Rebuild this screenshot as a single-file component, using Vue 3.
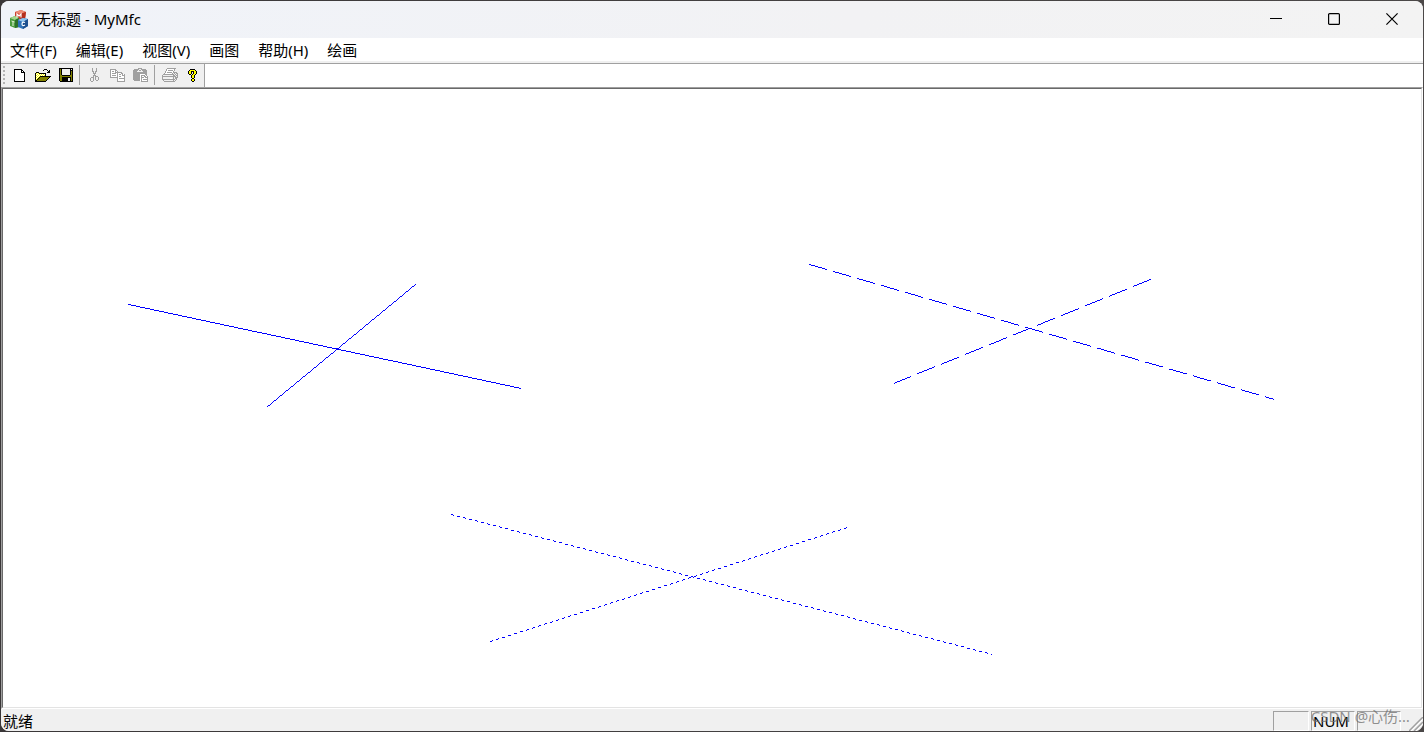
<script setup>
const BLACK = '#000000'
const OLIVE = '#808000'
const YELLOW = '#ffff00'
const GREY = '#a0a0a0'

const palette = { '#': BLACK, o: OLIVE, y: YELLOW, w: '#ffffff', s: '#f0f0f0', g: GREY }

const glyphs = {
  new: [
    '########...',
    '#wwwwww##..',
    '#wwwwww#w#.',
    '#wwwwww####',
    '#wwwwwwwww#',
    '#wwwwwwwww#',
    '#wwwwwwwww#',
    '#wwwwwwwww#',
    '#wwwwwwwww#',
    '#wwwwwwwww#',
    '#wwwwwwwww#',
    '#wwwwwwwww#',
    '###########',
  ],
  open: [
    '.........###....',
    '........#...#.#.',
    '.............##.',
    '.###........###.',
    '#ywy#######.....',
    '#wywywywyw#.....',
    '#ywywywywy#.....',
    '#wywy###########',
    '#ywy#ooooooooo#.',
    '#wy#ooooooooo#..',
    '#y#ooooooooo#...',
    '##ooooooooo#....',
    '###########.....',
  ],
  save: [
    '##############',
    '#o#ssssssss#s#',
    '#o#ssssssss###',
    '#o#ssssssss#o#',
    '#o#ssssssss#o#',
    '#o#ssssssss#o#',
    '#o#ssssssss#o#',
    '#oo########oo#',
    '#oooooooooooo#',
    '#oo#########o#',
    '#oo######ss#o#',
    '#oo######ss#o#',
    '#oo######ss#o#',
    '.#############',
  ],
  cut: [
    '..g...g..',
    '..g...g..',
    '..g...g..',
    '..gg.gg..',
    '...g.g...',
    '...ggg...',
    '....g....',
    '...ggg...',
    '...g.ggg.',
    '.ggg.g..g',
    'g..g.g..g',
    'g..g.g..g',
    'g..g..gg.',
    '.gg......',
  ],
  copy: [
    'gggggg.........',
    'gwwwwgg........',
    'gwggwgwg.......',
    'gwwwwggggggg...',
    'gwggggwgwwwgg..',
    'gwwwwwwgwggwgwg',
    'gwggggwgwwwwggg',
    'gwwwwwwgwggwwwg',
    'ggggggggwwwwwwg',
    '.......gwgggggg',
    '.......gwwwwwwg',
    '.......gwwwwwwg',
    '.......gggggggg',
  ],
  paste: [
    '.....gggg......',
    '.ggggg..ggggg..',
    'ggggg.gg.ggggg.',
    'gggg......gggg.',
    'gggggggggggggg.',
    'gggggggggggggg.',
    'gggggggwwwwwgg.',
    'gggggggwggggwg.',
    'gggggggwgwwggwg',
    'gggggggwgggwggg',
    'gggggggwgwwwwwg',
    'gggggggwgwggggg',
    '.ggggggwgwwwwwg',
    '........ggggggg',
  ],
  print: [
    '.....ggggggggg..',
    '....gwwwwwwwg...',
    '....gwgggggwg...',
    '...gwwwwwwwg....',
    '...gwgggggwgggg.',
    '..gwwwwwwwg.g.gg',
    '.ggggggggggg.g.g',
    'g..........gg.gg',
    'gggggggggggggg.g',
    'g..........g.ggg',
    'g.......ww.g.gg.',
    'ggggggggggggg.g.',
    '.g.........g.g..',
    '..ggggggggggg...',
  ],
  help: [
    '..#####..',
    '.#yyyyy#.',
    '#yy###yy#',
    '#yy#.#yy#',
    '#yy#.#yy#',
    '.##.#yy#.',
    '...#yy#..',
    '...#yy#..',
    '...#yy#..',
    '....##...',
    '...#yy#..',
    '...#yy#..',
    '....##...',
  ],
}

function layers(rows) {
  const out = {}
  rows.forEach((row, y) => {
    ;[...row].forEach((c, x) => {
      if (c !== '.') out[c] = (out[c] || '') + `M${x} ${y}h1v1h-1z`
    })
  })
  return Object.entries(out).map(([c, d]) => ({ fill: palette[c], d }))
}

const groups = [
  [
    { id: 'new', label: '新建' },
    { id: 'open', label: '打开' },
    { id: 'save', label: '保存' },
  ],
  [
    { id: 'cut', label: '剪切', disabled: true },
    { id: 'copy', label: '复制', disabled: true },
    { id: 'paste', label: '粘贴', disabled: true },
  ],
  [
    { id: 'print', label: '打印', disabled: true },
    { id: 'help', label: '关于' },
  ],
].map((g) =>
  g.map((b) => ({
    ...b,
    w: glyphs[b.id][0].length,
    h: glyphs[b.id].length,
    layers: layers(glyphs[b.id]),
  })),
)

const menus = ['文件(F)', '编辑(E)', '视图(V)', '画图', '帮助(H)', '绘画']

// Pen strokes in client coordinates: start, end, pixels on, pixels off.
const strokes = [
  { from: [125, 215], to: [518, 299], on: 1, off: 0 },
  { from: [412, 195], to: [263, 318], on: 1, off: 0 },
  { from: [806, 175], to: [1271, 310], on: 18, off: 6 },
  { from: [1147, 190], to: [890, 294], on: 18, off: 6 },
  { from: [448, 425], to: [989, 565], on: 3, off: 3 },
  { from: [487, 552], to: [844, 438], on: 3, off: 3 },
]

// One-pixel-wide line without smoothing, as a device pen draws it.
function trace({ from, to, on, off }) {
  const dx = to[0] - from[0]
  const dy = to[1] - from[1]
  const n = Math.abs(dx)
  let d = ''
  for (let i = 0; i < n; i++) {
    if (i % (on + off) >= on) continue
    const x = from[0] + Math.sign(dx) * i
    const y = Math.round(from[1] + (dy * i) / n)
    d += `M${x} ${y}h1v1h-1z`
  }
  return d
}
const drawing = strokes.map(trace).join('')
</script>

<template>
  <div class="desktop">
    <div class="window">
      <header class="titlebar">
        <svg class="logo" width="20" height="20" viewBox="0 0 20 20" aria-hidden="true">
          <path d="M6 3l6-2 5 2-1 7-5 2-5-2z" fill="#c9402c" />
          <path d="M6 3l6-2 5 2-6 2z" fill="#ee8c76" />
          <path d="M11 5l6-2-1 7-5 2z" fill="#b5301f" />
          <path d="M1 9l5-2 4 2v9l-4 1-5-2z" fill="#4a9b3c" />
          <path d="M1 9l5-2 4 2-4 2z" fill="#a5d48b" />
          <path d="M6 11l4-2v9l-4 1z" fill="#2c7029" />
          <path d="M9 11l5-2 5 1v7l-5 3-5-2z" fill="#2f72b8" />
          <path d="M9 11l5-2 5 1-5 3z" fill="#8fc4ee" />
          <path d="M14 13l5-3v7l-5 3z" fill="#1e508f" />
          <path d="M8 8.500V5l2 2 2-2v3.500" fill="none" stroke="#fff" stroke-width="1.200" />
          <path d="M2.500 12l3 1M4 13v4" fill="none" stroke="#e8f6dd" stroke-width="1" />
          <path d="M16 13.500q-3-1-3 1.500t3 1" fill="none" stroke="#fff" stroke-width="1.200" />
        </svg>
        <h1 class="title">无标题 - MyMfc</h1>
        <div class="captions">
          <button type="button" aria-label="最小化">
            <svg width="12" height="12" viewBox="0 0 12 12"><path d="M0 5.500h12" stroke="#000" /></svg>
          </button>
          <button type="button" aria-label="最大化">
            <svg width="12" height="12" viewBox="0 0 12 12">
              <rect x=".6" y=".6" width="10.800" height="10.800" rx="1" fill="none" stroke="#000" stroke-width="1.200" />
            </svg>
          </button>
          <button type="button" aria-label="关闭">
            <svg width="12" height="12" viewBox="0 0 12 12">
              <path d="M.4.4l11.200 11.200M11.600.4L.4 11.600" stroke="#000" stroke-width="1.200" />
            </svg>
          </button>
        </div>
      </header>

      <nav class="menubar">
        <button v-for="m in menus" :key="m" type="button">{{ m }}</button>
      </nav>

      <div class="toolrow">
        <div class="toolbar" role="toolbar" aria-label="工具栏">
          <span class="grip"></span>
          <div v-for="(g, i) in groups" :key="i" class="group">
            <button v-for="b in g" :key="b.id" type="button" :disabled="b.disabled" :aria-label="b.label">
              <svg :width="b.w" :height="b.h" :viewBox="`0 0 ${b.w} ${b.h}`" shape-rendering="crispEdges">
                <path v-for="l in b.layers" :key="l.fill" :fill="l.fill" :d="l.d" />
              </svg>
            </button>
          </div>
        </div>
      </div>

      <main class="client">
        <svg class="drawing" shape-rendering="crispEdges" role="img" aria-label="绘画">
          <path :d="drawing" fill="#0000ff" />
        </svg>
      </main>

      <footer class="statusbar">
        <span class="message">就绪</span>
        <span class="pane caps"></span>
        <span class="pane num">NUM</span>
        <span class="pane scroll"></span>
        <svg class="resize" width="14" height="14" viewBox="0 0 14 14" aria-hidden="true">
          <path d="M0 14L14 0M5 14l9-9M10 14l4-4" stroke="#a0a0a0" stroke-width="1.500" />
          <path d="M2 14L14 2M7 14l7-7" stroke="#fff" />
        </svg>
        <span class="watermark">CSDN @心伤…</span>
      </footer>
    </div>
  </div>
</template>

<style>
body {
  margin: 0;
  background: #3c3a3b;
}
</style>

<style scoped>
.desktop {
  box-sizing: border-box;
  height: 100vh;
  padding: 1px;
  background: linear-gradient(90deg, #3a3738, #4b4848);
  font: 15px/20px "Noto Sans", "Noto Sans CJK SC", sans-serif;
  color: #000;
}
.window {
  height: 100%;
  display: flex;
  flex-direction: column;
  overflow: hidden;
  border-radius: 8px;
  background: #f0f0f0;
}
button {
  margin: 0;
  padding: 0;
  border: 0;
  background: none;
  color: inherit;
  font: inherit;
}
svg {
  display: block;
}
.titlebar {
  box-sizing: border-box;
  display: flex;
  align-items: center;
  height: 37px;
  flex: none;
  padding: 0 2px 2px 8px;
  background: linear-gradient(90deg, #f0f3f9, #f2f2f4 60%, #f3f3f3);
}
.title {
  flex: 1;
  margin: 0 0 0 7px;
  font-size: 15px;
  font-weight: 400;
}
.captions {
  display: flex;
  height: 100%;
}
.captions button {
  width: 58px;
  display: grid;
  place-items: center;
}
.menubar {
  flex: none;
  display: flex;
  gap: 19px;
  padding: 2px 9px 1px;
  background: #fff;
  border-bottom: 2px solid #f0f0f0;
}
.toolrow {
  flex: none;
  height: 23px;
  display: flex;
  border-top: 1px solid #a0a0a0;
  background: #fff;
}
.toolbar {
  box-sizing: border-box;
  display: flex;
  align-items: center;
  padding-bottom: 1px;
  background: #f0f0f0;
  border-right: 1px solid #a0a0a0;
}
.grip {
  width: 2px;
  height: 18px;
  margin: 0 3px 0 2px;
  background: repeating-linear-gradient(#b4b4b4 0 2px, #f0f0f0 2px 4px);
}
.group {
  display: flex;
  align-items: center;
}
.group + .group {
  margin-left: 2px;
  padding-left: 3px;
  border-left: 1px solid #a0a0a0;
}
.group button {
  width: 23px;
  height: 20px;
  display: grid;
  place-items: center;
}
.client {
  flex: 1;
  min-height: 0;
  display: flex;
  background: #fff;
  border: 1px solid #a0a0a0;
  border-right-color: #fff;
  border-bottom-color: #fff;
}
.drawing {
  flex: 1;
  min-width: 0;
  border: 1px solid #696969;
  border-right-color: #e3e3e3;
  border-bottom-color: #e3e3e3;
}
.statusbar {
  position: relative;
  flex: none;
  display: flex;
  align-items: stretch;
  height: 22px;
  background: #f0f0f0;
}
.message {
  flex: 1;
  padding: 2px 0 0 2px;
}
.pane {
  box-sizing: border-box;
  margin: 2px 2px 0 0;
  border: 1px solid #a0a0a0;
  border-right-color: #fff;
  border-bottom-color: #fff;
  line-height: 18px;
}
.caps {
  width: 36px;
}
.num {
  width: 44px;
  padding-left: 1px;
}
.scroll {
  width: 44px;
}
.resize {
  align-self: flex-end;
  margin-left: 6px;
}
.watermark {
  position: absolute;
  right: 13px;
  bottom: 5px;
  color: rgba(110, 110, 110, 0.75);
}
</style>
